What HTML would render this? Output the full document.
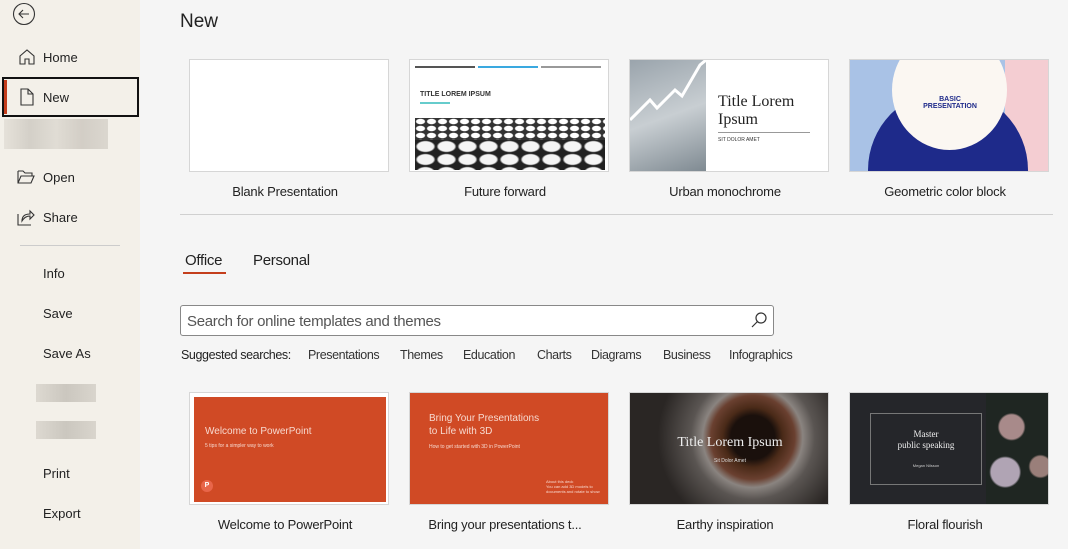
<!DOCTYPE html>
<html><head><meta charset="utf-8"><style>
*{margin:0;padding:0;box-sizing:border-box}
body{width:1068px;height:549px;overflow:hidden;background:#f5f5f5;font-family:"Liberation Sans",sans-serif;color:#222;position:relative;font-size:13px}
.side{position:absolute;left:0;top:0;width:140px;height:549px;background:#f3f0e9}
.it{position:absolute;left:43px;font-size:13px;color:#222}
.ic{position:absolute;left:17px}
.abs{position:absolute}
.thumb{position:absolute;width:200px;height:113px;border:1px solid #d6d6d6;background:#fff;overflow:hidden}
.cap{position:absolute;width:200px;text-align:center;font-size:13px;color:#222;letter-spacing:-0.2px}
.sg{position:absolute;top:348px;font-size:12.5px;color:#333;letter-spacing:-0.4px}
</style></head><body>
<div class="side">
<svg class="abs" style="left:12px;top:2px" width="24" height="24" viewBox="0 0 24 24"><circle cx="12" cy="12" r="10.5" fill="none" stroke="#333" stroke-width="1.1"/><path d="M17 12H7M11 8l-4 4 4 4" fill="none" stroke="#333" stroke-width="1.1"/></svg>
<svg class="ic" style="top:48px;left:18px" width="18" height="18" viewBox="0 0 18 18"><path d="M2 8L9 2l7 6v8h-5v-5H7v5H2z" fill="none" stroke="#333" stroke-width="1.1"/></svg>
<div class="it" style="top:50px">Home</div>
<div class="abs" style="left:2px;top:77px;width:137px;height:40px;border:2px solid #111"></div>
<div class="abs" style="left:4px;top:80px;width:3px;height:34px;background:#c43e1c"></div>
<svg class="ic" style="top:88px;left:20px" width="14" height="18" viewBox="0 0 14 18"><path d="M1 1h7l5 5v11H1z M8 1v5h5" fill="none" stroke="#333" stroke-width="1.1"/></svg>
<div class="it" style="top:90px">New</div>
<div class="abs" style="left:4px;top:119px;width:104px;height:30px;background:linear-gradient(90deg,#e4e0d8,#d0ccc4,#dedad2,#cfcac2,#d8d4cc);opacity:.9"></div>
<svg class="ic" style="top:169px" width="18" height="16" viewBox="0 0 18 16"><path d="M1 2h5l2 2h7v3M1 2v12h13l3-7H4L1 14" fill="none" stroke="#333" stroke-width="1.1"/></svg>
<div class="it" style="top:170px">Open</div>
<svg class="ic" style="top:208px" width="18" height="18" viewBox="0 0 18 18"><path d="M1 6v11h13M5 13c0-5 3-7 8-7V3l4 4-4 4V8c-4 0-6 2-8 5z" fill="none" stroke="#333" stroke-width="1.1"/></svg>
<div class="it" style="top:210px">Share</div>
<div class="abs" style="left:20px;top:245px;width:100px;height:1px;background:#ccc"></div>
<div class="it" style="top:266px">Info</div>
<div class="it" style="top:306px">Save</div>
<div class="it" style="top:346px">Save As</div>
<div class="abs" style="left:36px;top:384px;width:60px;height:18px;background:linear-gradient(90deg,#ddd9d1,#cbc7bf,#d9d5cd)"></div>
<div class="abs" style="left:36px;top:421px;width:60px;height:18px;background:linear-gradient(90deg,#ddd9d1,#cbc7bf,#d9d5cd)"></div>
<div class="it" style="top:466px">Print</div>
<div class="it" style="top:506px">Export</div>
</div>

<div class="abs" style="left:180px;top:11px;font-size:19px;color:#222">New</div>

<div class="thumb" style="left:189px;top:59px"></div>
<div class="cap" style="left:185px;top:184px">Blank Presentation</div>

<div class="thumb" style="left:409px;top:59px">
<div class="abs" style="left:5px;top:6px;width:60px;height:2px;background:#555"></div>
<div class="abs" style="left:68px;top:6px;width:60px;height:2px;background:#3aa9e0"></div>
<div class="abs" style="left:131px;top:6px;width:60px;height:2px;background:#999"></div>
<div class="abs" style="left:10px;top:31px;font-size:7px;font-weight:bold;color:#333">TITLE LOREM IPSUM</div>
<div class="abs" style="left:10px;top:42px;width:30px;height:2px;background:#6cc"></div>
<div class="abs" style="left:5px;top:58px;width:190px;height:52px;background:radial-gradient(ellipse 5px 3px,#fff 80%,#333 100%);background-size:11px 7px;"></div>
<div class="abs" style="left:5px;top:80px;width:190px;height:30px;background:radial-gradient(ellipse 10px 6px,#f4f4f4 80%,#222 100%);background-size:21px 13px;"></div>
</div>
<div class="cap" style="left:405px;top:184px">Future forward</div>

<div class="thumb" style="left:629px;top:59px">
<div class="abs" style="left:0;top:0;width:76px;height:113px;background:linear-gradient(160deg,#9aa4ac,#c8ced2 50%,#7d8890)"></div>
<svg class="abs" style="left:0;top:0" width="76" height="113"><path d="M0 60L20 40 27 48 45 30 52 36 70 5 76 0" fill="none" stroke="#fff" stroke-width="3"/></svg>
<div class="abs" style="left:88px;top:33px;font-family:'Liberation Serif',serif;font-size:16px;line-height:18px;color:#222">Title Lorem<br>Ipsum</div>
<div class="abs" style="left:88px;top:72px;width:92px;height:1px;background:#999"></div>
<div class="abs" style="left:88px;top:77px;font-size:5px;color:#333">SIT DOLOR AMET</div>
</div>
<div class="cap" style="left:625px;top:184px">Urban monochrome</div>

<div class="thumb" style="left:849px;top:59px;background:#a9c2e6">
<div class="abs" style="left:155px;top:0;width:45px;height:113px;background:#f4cdd2"></div>
<div class="abs" style="left:18px;top:30px;width:160px;height:150px;border-radius:80px 80px 0 0;background:#1e2a8a"></div>
<div class="abs" style="left:42px;top:-30px;width:115px;height:120px;border-radius:50%;background:#fbf7f2"></div>
<div class="abs" style="left:40px;top:36px;width:120px;text-align:center;font-size:7px;font-weight:bold;color:#1e2a8a">BASIC<br>PRESENTATION</div>
</div>
<div class="cap" style="left:845px;top:184px">Geometric color block</div>

<div class="abs" style="left:180px;top:214px;width:873px;height:1px;background:#d0d0d0"></div>

<div class="abs" style="left:185px;top:252px;font-size:15px;color:#222;letter-spacing:-0.3px">Office</div>
<div class="abs" style="left:183px;top:272px;width:43px;height:2px;background:#c43e1c"></div>
<div class="abs" style="left:253px;top:252px;font-size:15px;color:#222;letter-spacing:-0.3px">Personal</div>

<div class="abs" style="left:180px;top:305px;width:594px;height:31px;border:1px solid #888;border-radius:3px;background:#fff"></div>
<div class="abs" style="left:187px;top:313px;font-size:15px;color:#555;letter-spacing:-0.3px">Search for online templates and themes</div>
<svg class="abs" style="left:750px;top:311px" width="18" height="18" viewBox="0 0 18 18"><circle cx="11" cy="7" r="5" fill="none" stroke="#333" stroke-width="1.2"/><path d="M7.5 10.5L2 16" stroke="#333" stroke-width="1.2"/></svg>

<div class="sg" style="left:181px;color:#222">Suggested searches:</div>
<div class="sg" style="left:308px">Presentations</div>
<div class="sg" style="left:400px">Themes</div>
<div class="sg" style="left:463px">Education</div>
<div class="sg" style="left:537px">Charts</div>
<div class="sg" style="left:591px">Diagrams</div>
<div class="sg" style="left:663px">Business</div>
<div class="sg" style="left:729px">Infographics</div>

<div class="thumb" style="left:189px;top:392px;background:#fff">
<div class="abs" style="left:4px;top:4px;width:192px;height:105px;background:#d04a25"></div>
<div class="abs" style="left:15px;top:33px;font-size:10px;color:#f7d9cf">Welcome to PowerPoint</div>
<div class="abs" style="left:15px;top:50px;font-size:5px;color:#f7d9cf">5 tips for a simpler way to work</div>
<div class="abs" style="left:11px;top:87px;width:12px;height:12px;border-radius:50%;background:#e8664a;font-size:7px;color:#fff;font-weight:bold;text-align:center;line-height:12px">P</div>
</div>
<div class="cap" style="left:185px;top:517px">Welcome to PowerPoint</div>

<div class="thumb" style="left:409px;top:392px;background:#d04a25">
<div class="abs" style="left:19px;top:19px;font-size:10px;line-height:13px;color:#f7d9cf">Bring Your Presentations<br>to Life with 3D</div>
<div class="abs" style="left:19px;top:51px;font-size:5px;color:#f7d9cf">How to get started with 3D in PowerPoint</div>
<div class="abs" style="left:136px;top:86px;font-size:4px;color:#f7d9cf;width:62px">About this deck<br>You can add 3D models to documents and rotate to show</div>
</div>
<div class="cap" style="left:405px;top:517px">Bring your presentations t...</div>

<div class="thumb" style="left:629px;top:392px;background:radial-gradient(circle at 62% 40%,#1a100c 0 22px,#4a2a18 30px,#6a4030 42px,#8a8480 50px,#5a5552 62px,#2a2624 95px)">
<div class="abs" style="left:0;top:42px;width:200px;text-align:center;font-family:'Liberation Serif',serif;font-size:14px;color:#eee">Title Lorem Ipsum</div>
<div class="abs" style="left:0;top:65px;width:200px;text-align:center;font-size:5px;color:#ddd">Sit Dolor Amet</div>
</div>
<div class="cap" style="left:625px;top:517px">Earthy inspiration</div>

<div class="thumb" style="left:849px;top:392px;background:#25262a">
<div class="abs" style="left:136px;top:0;width:64px;height:113px;background:radial-gradient(circle at 40% 30%,#a88a8a 0 12px,transparent 14px),radial-gradient(circle at 30% 70%,#b0a4b4 0 14px,transparent 16px),radial-gradient(circle at 85% 65%,#9a7f7a 0 10px,transparent 12px),#1f2622"></div>
<div class="abs" style="left:20px;top:20px;width:112px;height:72px;border:1px solid #777"></div>
<div class="abs" style="left:20px;top:36px;width:112px;text-align:center;font-family:'Liberation Serif',serif;font-size:9px;line-height:11px;color:#eee">Master<br>public speaking</div>
<div class="abs" style="left:20px;top:70px;width:112px;text-align:center;font-size:4px;color:#ccc">Megan Nilsson</div>
</div>
<div class="cap" style="left:845px;top:517px">Floral flourish</div>
</body></html>
